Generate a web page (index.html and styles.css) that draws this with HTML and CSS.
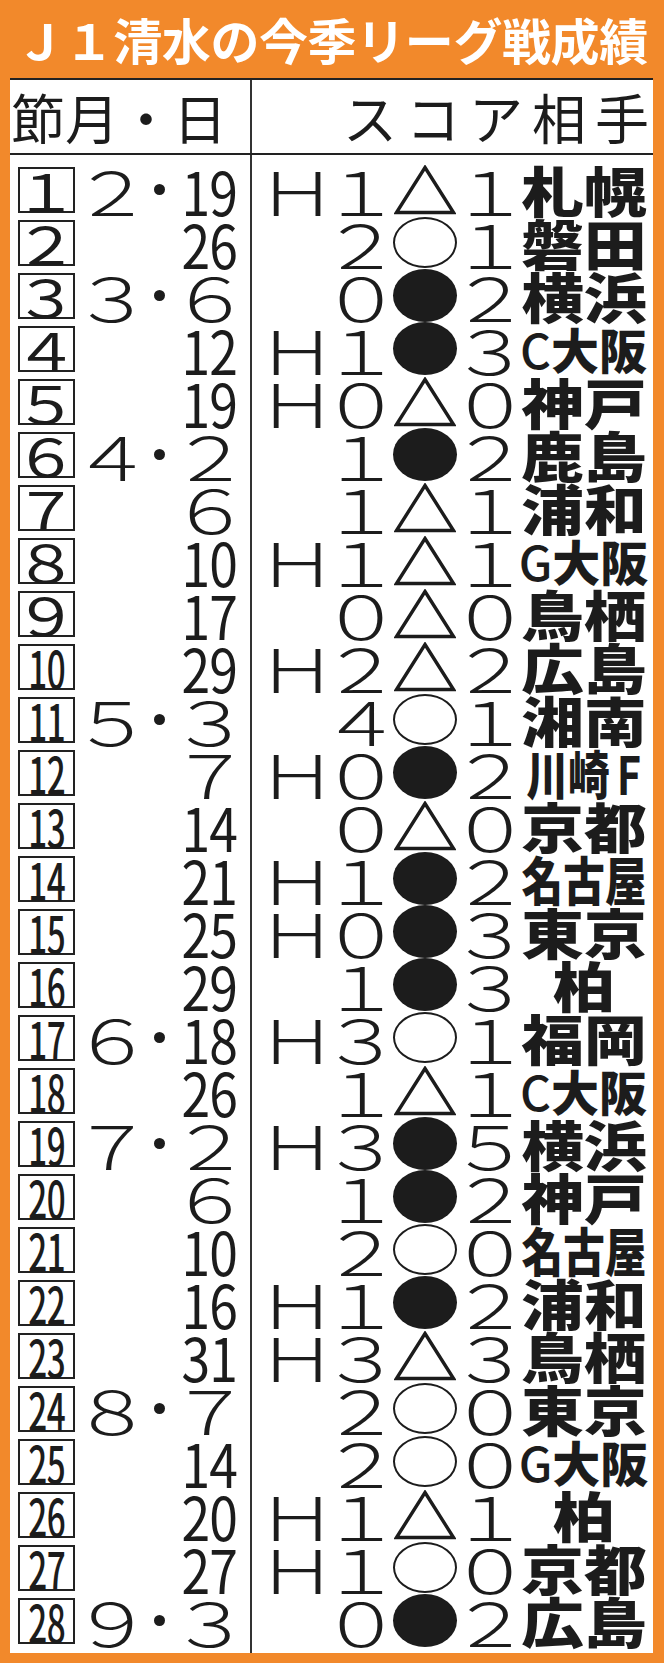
FILE: index.html
```html
<!DOCTYPE html>
<html lang="ja">
<head>
<meta charset="utf-8">
<title>J1清水の今季リーグ戦成績</title>
<link rel="stylesheet" href="styles.css">
</head>
<body>
<div class="frame">
  <h1 class="title">Ｊ１清水の今季リーグ戦成績</h1>
  <div class="panel">
    <div class="row head"><div class="l"><span class="ht">節月・日</span></div><div class="r"><span class="ht hr">スコア相手</span></div></div>
    <div class="row gap-top"><div class="l"></div><div class="r"></div></div>

    <div class="row"><div class="l"><span class="no"><span class="n1">１</span></span><span class="mon"><span class="fw">２</span></span><span class="dt"><i></i></span><span class="day"><span class="hw">19</span></span></div><div class="r"><span class="home"><span class="fw">Ｈ</span></span><span class="s1"><span class="fw">１</span></span><span class="mark"><svg class="tri" viewBox="0 0 62 50"><polygon points="31,2.5 59.5,47.5 2.5,47.5"/></svg></span><span class="s2"><span class="fw">１</span></span><span class="team"><span class="t2">札幌</span></span></div></div>

    <div class="row"><div class="l"><span class="no"><span class="n1">２</span></span><span class="mon"></span><span class="dt"></span><span class="day"><span class="hw">26</span></span></div><div class="r"><span class="home"></span><span class="s1"><span class="fw">２</span></span><span class="mark"><span class="win"></span></span><span class="s2"><span class="fw">１</span></span><span class="team"><span class="t2">磐田</span></span></div></div>

    <div class="row"><div class="l"><span class="no"><span class="n1">３</span></span><span class="mon"><span class="fw">３</span></span><span class="dt"><i></i></span><span class="day"><span class="fw">６</span></span></div><div class="r"><span class="home"></span><span class="s1"><span class="fw">０</span></span><span class="mark"><span class="loss"></span></span><span class="s2"><span class="fw">２</span></span><span class="team"><span class="t2">横浜</span></span></div></div>

    <div class="row"><div class="l"><span class="no"><span class="n1">４</span></span><span class="mon"></span><span class="dt"></span><span class="day"><span class="hw">12</span></span></div><div class="r"><span class="home"><span class="fw">Ｈ</span></span><span class="s1"><span class="fw">１</span></span><span class="mark"><span class="loss"></span></span><span class="s2"><span class="fw">３</span></span><span class="team"><span class="tc"><span class="lat">C</span>大阪</span></span></div></div>

    <div class="row"><div class="l"><span class="no"><span class="n1">５</span></span><span class="mon"></span><span class="dt"></span><span class="day"><span class="hw">19</span></span></div><div class="r"><span class="home"><span class="fw">Ｈ</span></span><span class="s1"><span class="fw">０</span></span><span class="mark"><svg class="tri" viewBox="0 0 62 50"><polygon points="31,2.5 59.5,47.5 2.5,47.5"/></svg></span><span class="s2"><span class="fw">０</span></span><span class="team"><span class="t2">神戸</span></span></div></div>

    <div class="row"><div class="l"><span class="no"><span class="n1">６</span></span><span class="mon"><span class="fw">４</span></span><span class="dt"><i></i></span><span class="day"><span class="fw">２</span></span></div><div class="r"><span class="home"></span><span class="s1"><span class="fw">１</span></span><span class="mark"><span class="loss"></span></span><span class="s2"><span class="fw">２</span></span><span class="team"><span class="t2">鹿島</span></span></div></div>

    <div class="row"><div class="l"><span class="no"><span class="n1">７</span></span><span class="mon"></span><span class="dt"></span><span class="day"><span class="fw">６</span></span></div><div class="r"><span class="home"></span><span class="s1"><span class="fw">１</span></span><span class="mark"><svg class="tri" viewBox="0 0 62 50"><polygon points="31,2.5 59.5,47.5 2.5,47.5"/></svg></span><span class="s2"><span class="fw">１</span></span><span class="team"><span class="t2">浦和</span></span></div></div>

    <div class="row"><div class="l"><span class="no"><span class="n1">８</span></span><span class="mon"></span><span class="dt"></span><span class="day"><span class="hw">10</span></span></div><div class="r"><span class="home"><span class="fw">Ｈ</span></span><span class="s1"><span class="fw">１</span></span><span class="mark"><svg class="tri" viewBox="0 0 62 50"><polygon points="31,2.5 59.5,47.5 2.5,47.5"/></svg></span><span class="s2"><span class="fw">１</span></span><span class="team"><span class="tc"><span class="lat">G</span>大阪</span></span></div></div>

    <div class="row"><div class="l"><span class="no"><span class="n1">９</span></span><span class="mon"></span><span class="dt"></span><span class="day"><span class="hw">17</span></span></div><div class="r"><span class="home"></span><span class="s1"><span class="fw">０</span></span><span class="mark"><svg class="tri" viewBox="0 0 62 50"><polygon points="31,2.5 59.5,47.5 2.5,47.5"/></svg></span><span class="s2"><span class="fw">０</span></span><span class="team"><span class="t2">鳥栖</span></span></div></div>

    <div class="row"><div class="l"><span class="no"><span class="n2">10</span></span><span class="mon"></span><span class="dt"></span><span class="day"><span class="hw">29</span></span></div><div class="r"><span class="home"><span class="fw">Ｈ</span></span><span class="s1"><span class="fw">２</span></span><span class="mark"><svg class="tri" viewBox="0 0 62 50"><polygon points="31,2.5 59.5,47.5 2.5,47.5"/></svg></span><span class="s2"><span class="fw">２</span></span><span class="team"><span class="t2">広島</span></span></div></div>

    <div class="row"><div class="l"><span class="no"><span class="n2">11</span></span><span class="mon"><span class="fw">５</span></span><span class="dt"><i></i></span><span class="day"><span class="fw">３</span></span></div><div class="r"><span class="home"></span><span class="s1"><span class="fw">４</span></span><span class="mark"><span class="win"></span></span><span class="s2"><span class="fw">１</span></span><span class="team"><span class="t2">湘南</span></span></div></div>

    <div class="row"><div class="l"><span class="no"><span class="n2">12</span></span><span class="mon"></span><span class="dt"></span><span class="day"><span class="fw">７</span></span></div><div class="r"><span class="home"><span class="fw">Ｈ</span></span><span class="s1"><span class="fw">０</span></span><span class="mark"><span class="loss"></span></span><span class="s2"><span class="fw">２</span></span><span class="team"><span class="t3">川崎<span class="latf">F</span></span></span></div></div>

    <div class="row"><div class="l"><span class="no"><span class="n2">13</span></span><span class="mon"></span><span class="dt"></span><span class="day"><span class="hw">14</span></span></div><div class="r"><span class="home"></span><span class="s1"><span class="fw">０</span></span><span class="mark"><svg class="tri" viewBox="0 0 62 50"><polygon points="31,2.5 59.5,47.5 2.5,47.5"/></svg></span><span class="s2"><span class="fw">０</span></span><span class="team"><span class="t2">京都</span></span></div></div>

    <div class="row"><div class="l"><span class="no"><span class="n2">14</span></span><span class="mon"></span><span class="dt"></span><span class="day"><span class="hw">21</span></span></div><div class="r"><span class="home"><span class="fw">Ｈ</span></span><span class="s1"><span class="fw">１</span></span><span class="mark"><span class="loss"></span></span><span class="s2"><span class="fw">２</span></span><span class="team"><span class="t3">名古屋</span></span></div></div>

    <div class="row"><div class="l"><span class="no"><span class="n2">15</span></span><span class="mon"></span><span class="dt"></span><span class="day"><span class="hw">25</span></span></div><div class="r"><span class="home"><span class="fw">Ｈ</span></span><span class="s1"><span class="fw">０</span></span><span class="mark"><span class="loss"></span></span><span class="s2"><span class="fw">３</span></span><span class="team"><span class="t2">東京</span></span></div></div>

    <div class="row"><div class="l"><span class="no"><span class="n2">16</span></span><span class="mon"></span><span class="dt"></span><span class="day"><span class="hw">29</span></span></div><div class="r"><span class="home"></span><span class="s1"><span class="fw">１</span></span><span class="mark"><span class="loss"></span></span><span class="s2"><span class="fw">３</span></span><span class="team"><span class="t1">柏</span></span></div></div>

    <div class="row"><div class="l"><span class="no"><span class="n2">17</span></span><span class="mon"><span class="fw">６</span></span><span class="dt"><i></i></span><span class="day"><span class="hw">18</span></span></div><div class="r"><span class="home"><span class="fw">Ｈ</span></span><span class="s1"><span class="fw">３</span></span><span class="mark"><span class="win"></span></span><span class="s2"><span class="fw">１</span></span><span class="team"><span class="t2">福岡</span></span></div></div>

    <div class="row"><div class="l"><span class="no"><span class="n2">18</span></span><span class="mon"></span><span class="dt"></span><span class="day"><span class="hw">26</span></span></div><div class="r"><span class="home"></span><span class="s1"><span class="fw">１</span></span><span class="mark"><svg class="tri" viewBox="0 0 62 50"><polygon points="31,2.5 59.5,47.5 2.5,47.5"/></svg></span><span class="s2"><span class="fw">１</span></span><span class="team"><span class="tc"><span class="lat">C</span>大阪</span></span></div></div>

    <div class="row"><div class="l"><span class="no"><span class="n2">19</span></span><span class="mon"><span class="fw">７</span></span><span class="dt"><i></i></span><span class="day"><span class="fw">２</span></span></div><div class="r"><span class="home"><span class="fw">Ｈ</span></span><span class="s1"><span class="fw">３</span></span><span class="mark"><span class="loss"></span></span><span class="s2"><span class="fw">５</span></span><span class="team"><span class="t2">横浜</span></span></div></div>

    <div class="row"><div class="l"><span class="no"><span class="n2">20</span></span><span class="mon"></span><span class="dt"></span><span class="day"><span class="fw">６</span></span></div><div class="r"><span class="home"></span><span class="s1"><span class="fw">１</span></span><span class="mark"><span class="loss"></span></span><span class="s2"><span class="fw">２</span></span><span class="team"><span class="t2">神戸</span></span></div></div>

    <div class="row"><div class="l"><span class="no"><span class="n2">21</span></span><span class="mon"></span><span class="dt"></span><span class="day"><span class="hw">10</span></span></div><div class="r"><span class="home"></span><span class="s1"><span class="fw">２</span></span><span class="mark"><span class="win"></span></span><span class="s2"><span class="fw">０</span></span><span class="team"><span class="t3">名古屋</span></span></div></div>

    <div class="row"><div class="l"><span class="no"><span class="n2">22</span></span><span class="mon"></span><span class="dt"></span><span class="day"><span class="hw">16</span></span></div><div class="r"><span class="home"><span class="fw">Ｈ</span></span><span class="s1"><span class="fw">１</span></span><span class="mark"><span class="loss"></span></span><span class="s2"><span class="fw">２</span></span><span class="team"><span class="t2">浦和</span></span></div></div>

    <div class="row"><div class="l"><span class="no"><span class="n2">23</span></span><span class="mon"></span><span class="dt"></span><span class="day"><span class="hw">31</span></span></div><div class="r"><span class="home"><span class="fw">Ｈ</span></span><span class="s1"><span class="fw">３</span></span><span class="mark"><svg class="tri" viewBox="0 0 62 50"><polygon points="31,2.5 59.5,47.5 2.5,47.5"/></svg></span><span class="s2"><span class="fw">３</span></span><span class="team"><span class="t2">鳥栖</span></span></div></div>

    <div class="row"><div class="l"><span class="no"><span class="n2">24</span></span><span class="mon"><span class="fw">８</span></span><span class="dt"><i></i></span><span class="day"><span class="fw">７</span></span></div><div class="r"><span class="home"></span><span class="s1"><span class="fw">２</span></span><span class="mark"><span class="win"></span></span><span class="s2"><span class="fw">０</span></span><span class="team"><span class="t2">東京</span></span></div></div>

    <div class="row"><div class="l"><span class="no"><span class="n2">25</span></span><span class="mon"></span><span class="dt"></span><span class="day"><span class="hw">14</span></span></div><div class="r"><span class="home"></span><span class="s1"><span class="fw">２</span></span><span class="mark"><span class="win"></span></span><span class="s2"><span class="fw">０</span></span><span class="team"><span class="tc"><span class="lat">G</span>大阪</span></span></div></div>

    <div class="row"><div class="l"><span class="no"><span class="n2">26</span></span><span class="mon"></span><span class="dt"></span><span class="day"><span class="hw">20</span></span></div><div class="r"><span class="home"><span class="fw">Ｈ</span></span><span class="s1"><span class="fw">１</span></span><span class="mark"><svg class="tri" viewBox="0 0 62 50"><polygon points="31,2.5 59.5,47.5 2.5,47.5"/></svg></span><span class="s2"><span class="fw">１</span></span><span class="team"><span class="t1">柏</span></span></div></div>

    <div class="row"><div class="l"><span class="no"><span class="n2">27</span></span><span class="mon"></span><span class="dt"></span><span class="day"><span class="hw">27</span></span></div><div class="r"><span class="home"><span class="fw">Ｈ</span></span><span class="s1"><span class="fw">１</span></span><span class="mark"><span class="win"></span></span><span class="s2"><span class="fw">０</span></span><span class="team"><span class="t2">京都</span></span></div></div>

    <div class="row"><div class="l"><span class="no"><span class="n2">28</span></span><span class="mon"><span class="fw">９</span></span><span class="dt"><i></i></span><span class="day"><span class="fw">３</span></span></div><div class="r"><span class="home"></span><span class="s1"><span class="fw">０</span></span><span class="mark"><span class="loss"></span></span><span class="s2"><span class="fw">２</span></span><span class="team"><span class="t2">広島</span></span></div></div>

    <div class="row gap-bot"><div class="l"></div><div class="r"></div></div>
  </div>
</div>
</body>
</html>
```

FILE: styles.css
```css
* { box-sizing: border-box; }
html, body { margin: 0; padding: 0; background: #f2892b; }
.frame {
  width: 664px;
  height: 1663px;
  background: #f2892b;
  padding: 0 11px 10px 10px;
  display: flex;
  flex-direction: column;
  font-family: "Noto Sans CJK JP", "Noto Sans", sans-serif;
  color: #1c1c1c;
}
.title {
  margin: 0;
  flex: none;
  height: 78px;
  color: #fff;
  font-weight: 700;
  font-size: 49px;
  line-height: 78px;
  letter-spacing: -0.4px;
  padding-left: 6px;
  white-space: nowrap;
}
.panel {
  flex: 1;
  background: #fff;
  border-top: 2px solid #222;
  display: flex;
  flex-direction: column;
}
.row { display: flex; height: 53px; flex: none; }
.l {
  width: 242px;
  flex: none;
  border-right: 2px solid #333;
  display: flex;
  align-items: center;
  padding-left: 8px;
}
.r {
  flex: 1;
  display: flex;
  align-items: center;
  padding-left: 12px;
}
.head { height: 75px; border-bottom: 2px solid #222; }
.head .l { padding-left: 1px; }
.head .r { justify-content: flex-end; padding-right: 4px; }
.ht { font-size: 54px; font-weight: 400; line-height: 1; white-space: nowrap; }
.hr { letter-spacing: 9px; margin-right: -9px; }
.gap-top { height: 8px; }
.gap-bot { flex: 1; }

.no, .mon, .dt, .day, .home, .s1, .mark, .s2, .team {
  display: flex;
  align-items: center;
  justify-content: center;
  height: 53px;
  flex: none;
  line-height: 1;
  white-space: nowrap;
}
.no { width: 57px; height: 46px; border: 2px solid #222; }
.mon { width: 48px; margin-left: 13px; }
.dt { width: 46px; }
.dt i { display: block; width: 11px; height: 11px; border-radius: 50%; background: #1c1c1c; }
.day { width: 55px; }
.home { width: 65px; }
.s1 { width: 63px; }
.mark { width: 66px; }
.s2 { width: 63px; }
.team { width: 125px; }

.fw, .hw, .n1, .n2 { display: inline-block; line-height: 0.8; }
.fw { font-size: 60px; font-weight: 300; transform: scaleX(1.36); }
.hw { font-size: 60px; font-weight: 400; transform: scaleX(0.86); letter-spacing: -1px; }
.n1 { font-size: 52px; font-weight: 400; transform: scaleX(1.25); }
.n2 { font-size: 52px; font-weight: 500; transform: scaleX(0.64); letter-spacing: -1px; }

.tri { width: 62px; height: 50px; display: block; }
.tri polygon { fill: none; stroke: #1c1c1c; stroke-width: 3.4; stroke-linejoin: miter; }
.win { display: block; width: 64px; height: 51px; border: 2.8px solid #1c1c1c; border-radius: 50%; }
.loss { display: block; width: 64px; height: 53px; background: #1c1c1c; border-radius: 50%; }

.t2, .t3, .tc, .t1 { display: inline-block; font-weight: 900; line-height: 0.8; }
.t2 { font-size: 54px; transform: scaleX(1.16); }
.t1 { font-size: 54px; transform: scaleX(1.16); }
.t3 { font-size: 52px; transform: scaleX(0.8); }
.tc { font-size: 48px; }
.lat { font-weight: 500; }
.latf { font-weight: 700; margin-left: 9px; }
```
